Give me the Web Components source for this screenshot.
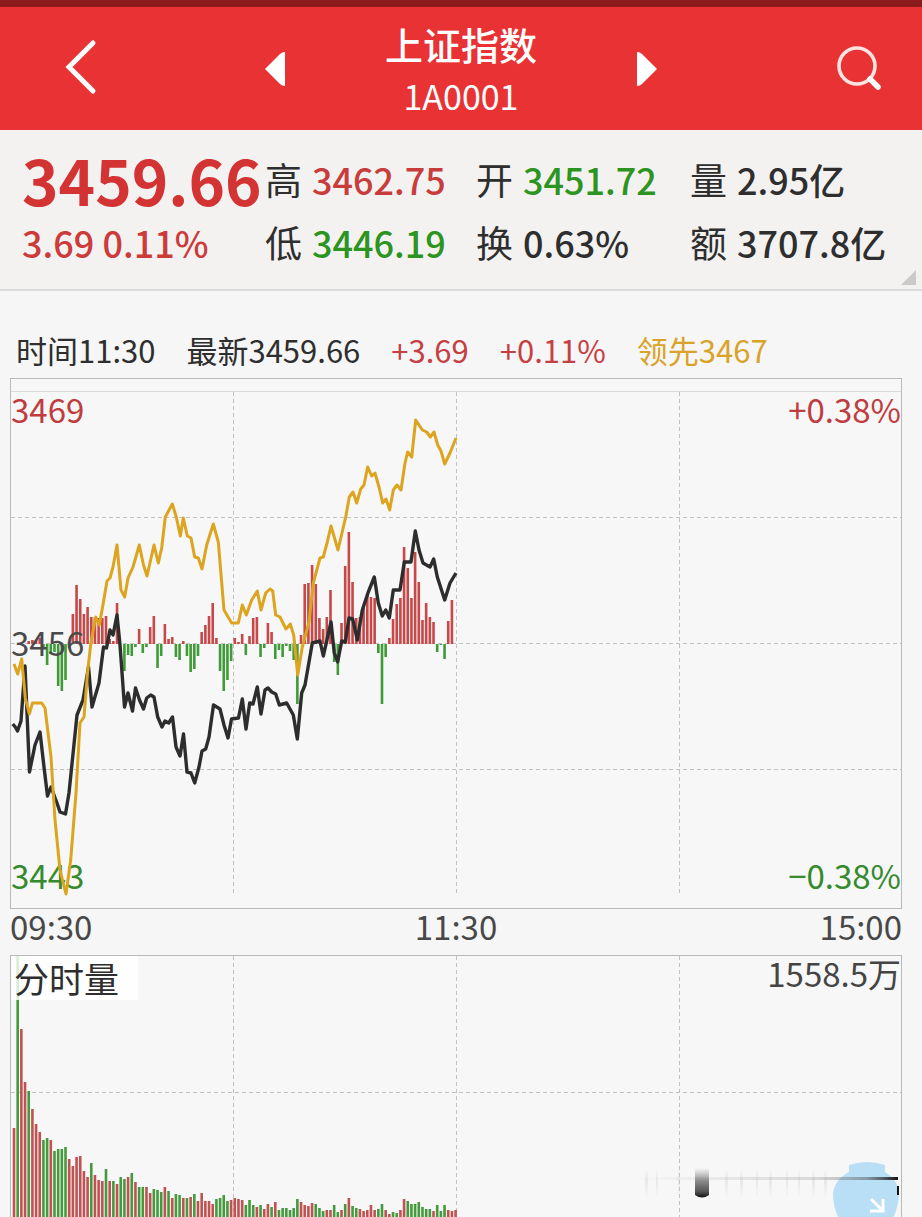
<!DOCTYPE html>
<html lang="zh-CN">
<head>
<meta charset="utf-8">
<meta name="viewport" content="width=device-width, initial-scale=1">
<title>上证指数 1A0001</title>
<style>
  html { background: #f6f6f6; }
  body { margin: 0; font-family: "Noto Sans CJK SC", "Noto Sans", sans-serif; color: #2e2e2e; }
</style>
</head>
<body>
<index-screen></index-screen>

<script>
const define = (name, html, setup) => customElements.define(name, class extends HTMLElement {
  constructor() {
    super();
    const tpl = document.createElement('template');
    tpl.innerHTML = html;
    this.attachShadow({ mode: 'open' }).append(tpl.content.cloneNode(true));
  }
  connectedCallback() { if (setup) setup(this.shadowRoot, this); }
});

/* Red title bar with back, previous / next index and search */
define('index-header', `
<style>
  :host { display: grid; grid-template-columns: 166fr 218fr 154fr 218fr 166fr; align-items: center;
    justify-items: center; height: 123px; border-top: 7px solid #8c1b1b; background: #e93234; color: #fff; }
  button { display: block; border: 0; padding: 0; background: none; color: inherit; }
  svg { display: block; }
  .search { justify-self: end; margin-right: 39px; }
  .title { text-align: center; white-space: nowrap; }
  h1 { margin: 0; font-size: 38px; line-height: 54px; font-weight: 500; }
  p { margin: 0; font-size: 34px; line-height: 50px; font-weight: 400; }
</style>
<button aria-label="返回"><svg width="36" height="60" viewBox="0 0 36 60" fill="none" stroke="#fff" stroke-width="5" stroke-linecap="round" stroke-linejoin="miter"><path d="M28 4 L4 28 L28 52"/></svg></button>
<button aria-label="上一个"><svg width="20" height="34" viewBox="0 0 20 34"><path d="M0 17 L15 2 Q17 0 20 0 V34 Q17 34 15 32Z" fill="#fff"/></svg></button>
<div class="title"><h1><slot name="name"></slot></h1><p><slot name="code"></slot></p></div>
<button aria-label="下一个"><svg width="20" height="34" viewBox="0 0 20 34"><path d="M20 17 L5 2 Q3 0 0 0 V34 Q3 34 5 32Z" fill="#fff"/></svg></button>
<button class="search" aria-label="搜索"><svg width="48" height="48" viewBox="0 0 48 48" fill="none" stroke="#fff" stroke-linecap="round"><circle cx="22" cy="21" r="18" stroke="#ffe3e0" stroke-width="3.6"/><path d="M35 34 L43 42" stroke-width="5.5"/></svg></button>
`);

/* Label and value pair */
define('quote-stat', `
<style>
  :host { display: flex; gap: 10px; align-items: center; white-space: nowrap; font-size: 37px; line-height: 63px; }
  .value { font-size: 36px; font-weight: 500; }
  :host([tone="up"]) .value { color: #c93c3c; }
  :host([tone="down"]) .value { color: #2c9420; }
</style>
<span><slot name="label"></slot></span><span class="value"><slot></slot></span>
`);

/* Latest price with the day's figures */
define('quote-summary', `
<style>
  :host { display: grid; position: relative; grid-template-columns: 243fr 211fr 214fr 232fr;
    grid-template-rows: 63px 63px; padding: 18px 0 15px 22px; background: #f3f2f1; border-bottom: 2px solid #dcdada; }
  .cell { min-width: 0; white-space: nowrap; line-height: 63px; color: #cc3a3a; }
  .price { font-size: 62px; font-weight: 700; color: #d33332; }
  .change { font-size: 36px; font-weight: 500; }
  .more { position: absolute; right: 6px; bottom: 4px; width: 15px; height: 15px; border: 0; padding: 0;
    background: #cbcaca; clip-path: polygon(100% 0, 100% 100%, 0 100%); }
</style>
<div class="cell price">3459.66</div>
<quote-stat tone="up"><span slot="label">高</span>3462.75</quote-stat>
<quote-stat tone="down"><span slot="label">开</span>3451.72</quote-stat>
<quote-stat><span slot="label">量</span>2.95亿</quote-stat>
<div class="cell change">3.69 0.11%</div>
<quote-stat tone="down"><span slot="label">低</span>3446.19</quote-stat>
<quote-stat><span slot="label">换</span>0.63%</quote-stat>
<quote-stat><span slot="label">额</span>3707.8亿</quote-stat>
<button class="more" aria-label="展开"></button>
`);

define('tick-line', `
<style>
  :host { display: flex; gap: 31px; padding: 36px 16px 5px; font-size: 31px; line-height: 46px; white-space: nowrap; }
  .up { color: #c63f42; }
  .lead { color: #d9a228; }
</style>
<span>时间11:30</span><span>最新3459.66</span><span class="up">+3.69</span><span class="up">+0.11%</span><span class="lead">领先3467</span>
`);

const FIRST_X = 14, STEP = 3.68;
const barX = i => FIRST_X + STEP * i;
const barPath = (items) => items.map(([i, y0, y1]) => `M${barX(i).toFixed(2)} ${y0}V${y1}`).join('');

/* Strength bars, one per minute; positive rises above the previous close */
const strength = [0,0,0,0,3,4,4,6,-5,-21,-10,-8,-42,-47,-36,-4,30,59,45,30,37,27,27,26,26,28,5,3,41,0,
  -27,-11,-12,-3,15,-9,-3,17,28,-24,-12,20,5,7,-13,-16,3,-12,-28,-25,-12,12,19,28,41,6,-27,-47,-36,-17,
  6,2,10,-11,8,26,27,-13,-4,21,12,-15,-6,-13,-2,-7,-16,-60,9,60,61,79,60,26,15,27,54,-18,-31,21,
  78,112,62,26,27,37,51,47,46,-9,-60,-13,6,25,40,46,97,76,46,92,62,24,41,27,22,-8,-1,-15,23,44,0];

const priceLine = "12.7,724 15.3,727 17.5,731 21,721 25,666 29.5,772 35,745 40,732 44,767 47.5,796 51,787 57,803 60,812 65.5,814 69,793 77,715 83,700 88.5,667 92,707 99,683 103.5,647 106.5,648 110,630 113,635 117,615 120,645 124.5,707 128,693 132.5,711 135.5,688 139.5,700 143.5,709 146.7,698 150.7,695 154,697 157.7,717 162,727 165,721 168.7,723 172.5,717 176,747 180,756 183.5,734 187,772 191,773 194.7,783 199,767 202,751 205.7,749 209,737 213.5,705 220,709 224,725 228,738 231.5,719 238.5,718 242.3,699 246,729 249.7,703 253,704 257.3,687 261,714 265,690 268,688 271.7,692 275.7,694 279.3,705 286.7,703 293.3,715 297.3,739 301.7,693 305,685 312.3,643 320,641 323.3,656 331,622 334.3,653 337.7,662 341.7,641 345.3,642 349,618 352.7,619 357.3,640 362.3,610 368.3,592 374.3,577 378.3,603 382.3,616 385.7,610 389.3,618 393.3,590 400,590 404.3,562 411,562 415.3,531 419,550 423,563 430,567 433.7,559 437.3,577 444.7,600 450,583 456,573";
const leadLine = "14,664 17.7,674 21.7,659 25.3,698 29.3,714 32.5,703 41.7,703 45,708 51,757 55,820 60,870 66,894 70.7,860 76,793 80,723 84,717 87.5,673 91,642 95.7,617 99.3,625 103.3,603 107,581 110,578 113,567 117,545 121,590 124.7,597 128,578 133,567 139.3,545 143.5,565 147,576 154,545 158.3,563 161.7,548 165.3,517 172.3,504 176.3,517 180.3,536 183.3,518 187.3,536 191,538 194.7,557 198.3,558 202,569 206.7,545 213.3,524 218.3,542 224,610 231.7,623 238.3,623 242.3,605 246.3,615 251.7,600 257.3,591 261,610 265.7,593 270,589 272.7,591 275.7,615 280,617 286,629 290.3,624 293.7,635 297.7,675 302.3,647 309,622 313.3,583 320,558 323.3,557 327.3,542 331,526 338,550 345.7,517 349.3,497 353,492 356.7,503 360.7,489 364,485 367.7,467 371.7,476 375,473 379,487 382.7,503 386,499 389.7,510 393.3,490 397,485 401,490 405,463 407.7,452 411.7,457 415.7,420 422.3,430 426.7,432 430.3,437 434,432 437.7,445 441,451 444.7,464 450,453 456,438";

/* Intraday price chart */
define('price-chart', `
<style>
  :host { display: block; position: relative; box-sizing: border-box; height: 531px; margin: 0 20px 0 10px;
    font-size: 33px; line-height: 34px; background: #f7f7f7; border: 1px solid #b9b9b9; }
  svg { position: relative; display: block; width: 100%; height: 529px; }
  span { position: absolute; color: #4a4a4a; }
  .l { left: 0; } .r { right: 0; }
  .top { top: 13px; color: #bf3c40; } .mid { top: 246px; } .low { top: 479px; color: #348a2c; }
  .grid { stroke: #c2c2c2; stroke-dasharray: 4 3; }
</style>
<span class="l top">3469</span><span class="r top">+0.38%</span>
<span class="l low">3443</span><span class="r low">−0.38%</span>
<svg viewBox="11 379 890 529" preserveAspectRatio="none" fill="none" role="img" aria-label="分时走势">
  <path d="M11 391.5H901" stroke="#d9d9d9"/>
  <path class="grid" d="M11 517.5H901M11 643.5H901M11 769.5H901M233.5 392V895M456.5 392V895M679.5 392V895"/>
  <path class="up" stroke="#c64848" stroke-width="2.6"/>
  <path class="down" stroke="#3f9a38" stroke-width="2.6"/>
  <polyline points="${priceLine}" stroke="#2d2d2d" stroke-width="3.4" stroke-linejoin="round"/>
  <polyline points="${leadLine}" stroke="#dca41f" stroke-width="3" stroke-linejoin="round"/>
</svg>
<span class="l mid">3456</span>
`, root => {
  const rows = strength.map((v, i) => [i, 644, 644 - v]);
  root.querySelector('.up').setAttribute('d', barPath(rows.filter(r => r[2] < 644)));
  root.querySelector('.down').setAttribute('d', barPath(rows.filter(r => r[2] > 644)));
});

define('time-axis', `
<style>
  :host { display: grid; grid-template-columns: 1fr auto 1fr; height: 46px; margin: 0 20px 0 10px;
    font-size: 33px; line-height: 34px; color: #484848; }
  time:last-child { text-align: right; }
</style>
<time>09:30</time><time>11:30</time><time>15:00</time>
`);

/* Top of each one-minute volume bar, with r for rising and g for falling */
const volume = `1128r 956g 1029r 1082r 1091g 1109r 1124r 1132r 1140g 1138g 1140r 1151g 1149g 1149g 1147g 1159r 1166r 1157r 1156r 1171r
1177r 1163g 1175r 1180r 1181r 1169g 1181r 1181g 1184r 1177g 1179g 1177r 1173g 1182r 1187g 1187g 1187r 1193r 1189g 1190g
1192g 1187r 1191g 1198r 1194g 1195g 1198r 1198g 1197r 1194g 1201r 1193r 1201r 1201r 1204r 1199g 1198g 1195g 1201g 1200r
1198r 1199r 1200r 1205g 1200g 1205g 1207r 1205g 1209r 1204r 1207g 1202r 1210g 1208g 1208g 1210g 1208g 1199g 1202r 1205r
1206r 1203r 1204g 1208g 1211g 1210r 1210r 1205g 1212g 1210r 1204g 1198r 1206g 1208g 1209r 1211r 1210r 1205r 1210r 1209g
1204g 1210r 1214r 1212g 1213g 1210r 1199r 1201g 1204g 1204g 1202g 1207g 1209g 1209g 1211r 1205g 1211g 1205g 1210r 1211r 1210r`
  .split(/\s+/).map((t, i) => ({ i, y: parseInt(t, 10), up: t.endsWith('r') }));

/* Volume chart; its lower part runs on past the bottom of the screen */
define('volume-chart', `
<style>
  :host { display: block; position: relative; box-sizing: border-box; height: 262px; margin: 0 20px 0 10px;
    font-size: 33px; line-height: 34px; color: #444; background: #f7f7f7;
    border: 1px solid #b9b9b9; border-bottom: 0; }
  .plot { display: block; width: 100%; height: 261px; }
  .name { position: absolute; left: 0; top: 0; box-sizing: border-box; width: 127px; padding-left: 3px; font-size: 35px; line-height: 44px;
    color: #2e2e2e; background: rgba(255, 255, 255, .8); }
  .max { position: absolute; right: 0; top: 0; }
  .grid { stroke: #c2c2c2; stroke-dasharray: 4 3; }
  .float { position: absolute; right: 0; bottom: 0; display: block; width: 270px; height: 60px; border: 0; padding: 0; background: none; }
  .float svg { display: block; }
</style>
<svg class="plot" viewBox="11 956 890 261" preserveAspectRatio="none" fill="none" role="img" aria-label="成交量">
  <path class="grid" d="M11 1092.5H901M233.5 956V1217M456.5 956V1217M679.5 956V1217"/>
  <path class="up" stroke="#c05252" stroke-width="2.6"/>
  <path class="down" stroke="#459a3e" stroke-width="2.6"/>
</svg>
<span class="name">分时量</span>
<span class="max">1558.5万</span>
<button class="float" aria-label="收起"><svg width="270" height="60" viewBox="631 1157 270 60">
  <defs>
    <linearGradient id="h"><stop offset="0" stop-color="#777" stop-opacity="0"/><stop offset=".7" stop-color="#777" stop-opacity=".25"/><stop offset=".88" stop-color="#555" stop-opacity=".5"/><stop offset="1" stop-color="#111"/></linearGradient>
    <linearGradient id="v" x2="0" y2="1"><stop offset="0" stop-color="#999" stop-opacity="0"/><stop offset=".45" stop-color="#888"/><stop offset=".8" stop-color="#555"/><stop offset="1" stop-color="#111"/></linearGradient>
    <linearGradient id="s" x2="0" y2="1"><stop offset="0" stop-color="#ccc" stop-opacity="0"/><stop offset=".5" stop-color="#ccc" stop-opacity=".35"/><stop offset="1" stop-color="#ddd" stop-opacity=".1"/></linearGradient>
  </defs>
  <path d="M849 1165Q867 1159 885 1165V1172Q898 1180 899 1192Q899 1207 892 1220H840Q833 1209 833 1194Q834 1180 849 1172Z" fill="#b9dff6"/>
  <g fill="url(#s)"><rect x="645" y="1168" width="3" height="28"/><rect x="656" y="1168" width="2" height="28"/><rect x="678" y="1168" width="2" height="28"/><rect x="725" y="1168" width="3" height="28"/><rect x="740" y="1168" width="3" height="28"/><rect x="756" y="1168" width="2" height="28"/><rect x="769" y="1168" width="3" height="28"/><rect x="786" y="1168" width="2" height="28"/><rect x="798" y="1168" width="2" height="28"/><rect x="812" y="1168" width="3" height="28"/><rect x="824" y="1168" width="3" height="28"/></g>
  <rect x="635" y="1177" width="263" height="3" fill="url(#h)"/>
  <path d="M695 1168H709V1195Q702 1200 695 1195Z" fill="url(#v)"/>
  <path d="M898 1186V1195" stroke="#111" stroke-width="2"/>
  <path d="M871 1199L882 1210M883 1199V1211H870" fill="none" stroke="#fff" stroke-width="3"/>
</svg></button>
`, root => {
  const rows = up => volume.filter(v => v.up === up).map(v => [v.i, v.y, 1217]);
  root.querySelector('.up').setAttribute('d', barPath(rows(true)));
  root.querySelector('.down').setAttribute('d', barPath(rows(false)));
});

define('index-screen', `
<style>:host { display: block; overflow: hidden; }</style>
<index-header><span slot="name">上证指数</span><span slot="code">1A0001</span></index-header>
<quote-summary></quote-summary>
<tick-line></tick-line>
<price-chart></price-chart>
<time-axis></time-axis>
<volume-chart></volume-chart>
`);
</script>
</body>
</html>
